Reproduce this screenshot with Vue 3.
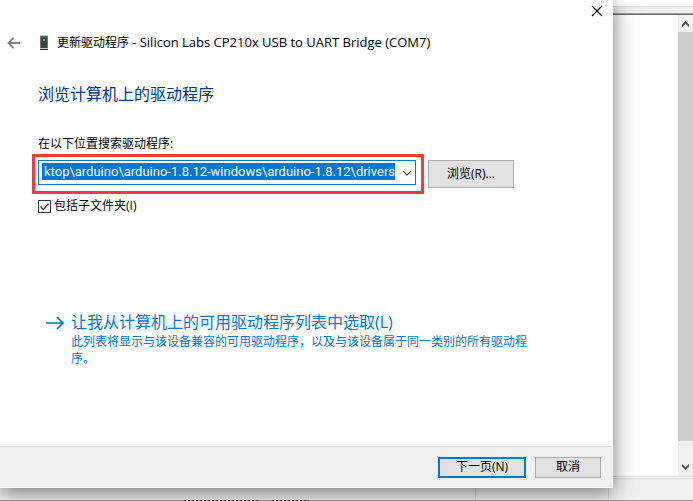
<script setup>
import { onMounted, ref } from 'vue'

const path = ref('ktop\\arduino\\arduino-1.8.12-windows\\arduino-1.8.12\\drivers')
const subfolders = ref(true)
const field = ref(null)

// Keep the end of a long path in view
onMounted(() => {
  field.value.scrollLeft = field.value.scrollWidth
})
</script>

<template>
  <div class="desktop">
    <div class="back-window" aria-hidden="true">
      <div class="back-top"></div>
      <div class="back-bar"></div>
      <div class="back-body">
        <div class="scrollbar">
          <svg class="scroll-arrow" width="15" height="17" viewBox="0 0 15 17">
            <path d="M4 12V9.500L7.500 6 11 9.500V12L7.500 8.800z" fill="#505050" />
          </svg>
          <div class="thumb"></div>
          <svg class="scroll-arrow" width="15" height="17" viewBox="0 0 15 17">
            <path d="M4 5v2.500L7.500 11 11 7.500V5L7.500 8.200z" fill="#505050" />
          </svg>
        </div>
      </div>
      <div class="status">
        <span class="pane"></span>
        <span class="pane pane-mid"></span>
        <span class="pane-end"></span>
      </div>
      <div class="back-edge"><span class="marks"></span><span class="marks marks-short"></span></div>
    </div>

    <main class="dialog">
      <div class="caption">
        <button class="close" type="button" aria-label="关闭">
          <svg width="12" height="12" viewBox="0 0 12 12">
            <path d="M1 1l10 10M11 1L1 11" stroke="#000" stroke-width="1.100" fill="none" />
          </svg>
        </button>
      </div>
      <header class="title">
        <button class="back" type="button" aria-label="返回">
          <svg width="14" height="12" viewBox="0 0 14 12">
            <path d="M13 6H2M6.500 1L1.500 6l5 5" stroke="#808080" stroke-width="1.800" fill="none" />
          </svg>
        </button>
        <svg class="device" width="10" height="16" viewBox="0 0 10 16">
          <path d="M1 1h8v13H1z" fill="#424242" />
          <path d="M1 1h8" stroke="#8a8a8a" />
          <path d="M1.500 1v12M8.500 1v12" stroke="#777" />
          <path d="M1 13h8v1H1z" fill="#ccc" />
          <path d="M1 14h8v1H1z" fill="#222" />
          <path d="M4 4h2v2H4z" fill="#23f03a" />
        </svg>
        <span>更新驱动程序 <span class="device-name">- Silicon Labs CP210x USB to UART Bridge (COM7)</span></span>
      </header>

      <section class="content">
        <h1>浏览计算机上的驱动程序</h1>
        <label class="field-label" for="path">在以下位置搜索驱动程序:</label>
        <div class="search">
          <div class="highlight">
            <div class="combo">
              <input id="path" ref="field" v-model="path" type="text" spellcheck="false" />
              <button class="drop" type="button" aria-label="展开">
                <svg width="10" height="6" viewBox="0 0 10 6">
                  <path d="M1 1l4 4 4-4" stroke="#444" stroke-width="1.200" fill="none" />
                </svg>
              </button>
            </div>
          </div>
          <button class="btn browse" type="button">浏览(R)...</button>
        </div>
        <label class="check">
          <input v-model="subfolders" type="checkbox" />
          <span>包括子文件夹(I)</span>
        </label>
        <a class="pick" href="#">
          <svg class="pick-arrow" width="18" height="14" viewBox="0 0 18 14">
            <path d="M0 7h17M11 1l6 6-6 6" stroke="#0078d7" stroke-width="1.700" fill="none" />
          </svg>
          <span class="pick-text">
            <span class="pick-title">让我从计算机上的可用驱动程序列表中选取(L)</span>
            <span class="pick-desc">此列表将显示与该设备兼容的可用驱动程序，以及与该设备属于同一类别的所有驱动程序。</span>
          </span>
        </a>
      </section>

      <footer class="footer">
        <button class="btn next" type="button">下一页(N)</button>
        <button class="btn cancel" type="button">取消</button>
      </footer>
    </main>
  </div>
</template>

<style>
body {
  margin: 0;
}
</style>

<style scoped>
* {
  box-sizing: border-box;
}
.desktop {
  position: relative;
  min-height: 100vh;
  display: flex;
  overflow: hidden;
  font: 12px/16px "Open Sans", "Noto Sans CJK SC", sans-serif;
  color: #000;
}
button,
input {
  font: inherit;
  color: inherit;
  margin: 0;
  padding: 0;
}
button {
  display: flex;
  align-items: center;
  justify-content: center;
  border: 0;
  background: none;
}
svg {
  display: block;
  flex: none;
}
.back-window {
  flex: 1;
  display: flex;
  flex-direction: column;
  background: #fff;
}
.back-top {
  height: 6px;
}
.back-bar {
  height: 9px;
  background: #efefef;
  border-top: 1px solid #dcdcdc;
  border-bottom: 1px solid #696969;
  box-shadow: inset 0 -1px #a0a0a0;
}
.back-body {
  flex: 1;
  display: flex;
  justify-content: flex-end;
}
.scrollbar {
  width: 15px;
  display: flex;
  flex-direction: column;
  background: #f0f0f0;
}
.thumb {
  flex: 1;
  margin-bottom: 18px;
  background: #cdcdcd;
}
.status {
  height: 24px;
  display: flex;
  background: #f0f0f0;
  border-top: 1px solid #d9d9d9;
  box-shadow: inset 0 1px #fff, inset 0 2px #d7d7d7;
}
.pane {
  flex: 1;
  border-right: 1px solid #d0d0d0;
}
.pane-mid {
  flex: none;
  width: 133px;
}
.pane-end {
  width: 84px;
}
.back-edge {
  display: flex;
  gap: 14px;
  height: 1px;
  padding-left: 184px;
  background: #9b9b9b;
}
.marks {
  width: 74px;
  height: 1px;
  background: repeating-linear-gradient(90deg, #333 0 2px, #9b9b9b 2px 4px);
}
.marks-short {
  width: 37px;
}
.dialog {
  position: absolute;
  inset: 0 80px 13px 0;
  display: flex;
  flex-direction: column;
  background: #fff;
  border-right: 1px solid #fff;
  border-bottom: 1px solid #fff;
  box-shadow: 0 4px 20px rgba(0, 0, 0, 0.55);
}
.caption {
  height: 24px;
  display: flex;
  justify-content: flex-end;
  padding-right: 9px;
}
.close {
  width: 12px;
  height: 22px;
}
.title {
  display: flex;
  align-items: center;
  height: 37px;
  padding-left: 7px;
}
.device-name {
  font-size: 13px;
}
.back {
  width: 14px;
  height: 20px;
  margin-right: 18px;
}
.device {
  margin-right: 8px;
}
.content {
  flex: 1;
  padding: 21px 76px 0 32px;
}
h1 {
  margin: 0 0 30px 6px;
  font-size: 16px;
  line-height: 24px;
  font-weight: 400;
  color: #003399;
}
.field-label {
  display: block;
  margin-left: 6px;
}
.search {
  display: flex;
  align-items: center;
  gap: 4px;
  margin: 2px 0 4px;
}
.highlight {
  width: 392px;
  border: 3px solid #fb3838;
  padding: 3px 5px 6px 3px;
}
.combo {
  display: flex;
  height: 25px;
  border: 1px solid #0078d7;
  padding: 2px 0 2px 3px;
}
.combo input {
  flex: 1;
  min-width: 0;
  height: 17px;
  border: 0;
  outline: 0;
  background: #0078d7;
  color: #fff;
  font-family: Roboto, "Noto Sans CJK SC", sans-serif;
  font-size: 13px;
  text-align: right;
}
.drop {
  width: 20px;
  height: 19px;
  padding-left: 4px;
}
.btn {
  border: 1px solid #adadad;
  background: #e1e1e1;
}
.browse {
  width: 86px;
  height: 28px;
}
.check {
  display: flex;
  align-items: center;
  gap: 3px;
  margin-left: 6px;
  width: max-content;
}
.check input {
  appearance: none;
  width: 13px;
  height: 13px;
  border: 1px solid #333;
  background: #fff;
}
.check input:checked {
  background: url("data:image/svg+xml,%3Csvg xmlns='http://www.w3.org/2000/svg' viewBox='0 0 11 11'%3E%3Cpath d='M1.500 5.500l3 3 5-6' stroke='%23333' stroke-width='1.200' fill='none'/%3E%3C/svg%3E");
}
.pick {
  display: flex;
  margin: 97px 0 0 14px;
  gap: 7px;
  color: #0078d7;
  text-decoration: none;
}
.pick-arrow {
  margin-top: 5px;
}
.pick-title,
.pick-desc {
  display: block;
}
.pick-title {
  font-size: 16px;
  line-height: 22px;
}
.pick-desc {
  line-height: 17px;
}
.footer {
  height: 41px;
  display: flex;
  align-items: center;
  justify-content: flex-end;
  gap: 9px;
  padding-right: 11px;
  background: #f0f0f0;
  border-top: 1px solid #dfdfdf;
}
.next {
  width: 88px;
  height: 21px;
  border: 2px solid #0078d7;
}
.cancel {
  width: 66px;
  height: 21px;
}
</style>
